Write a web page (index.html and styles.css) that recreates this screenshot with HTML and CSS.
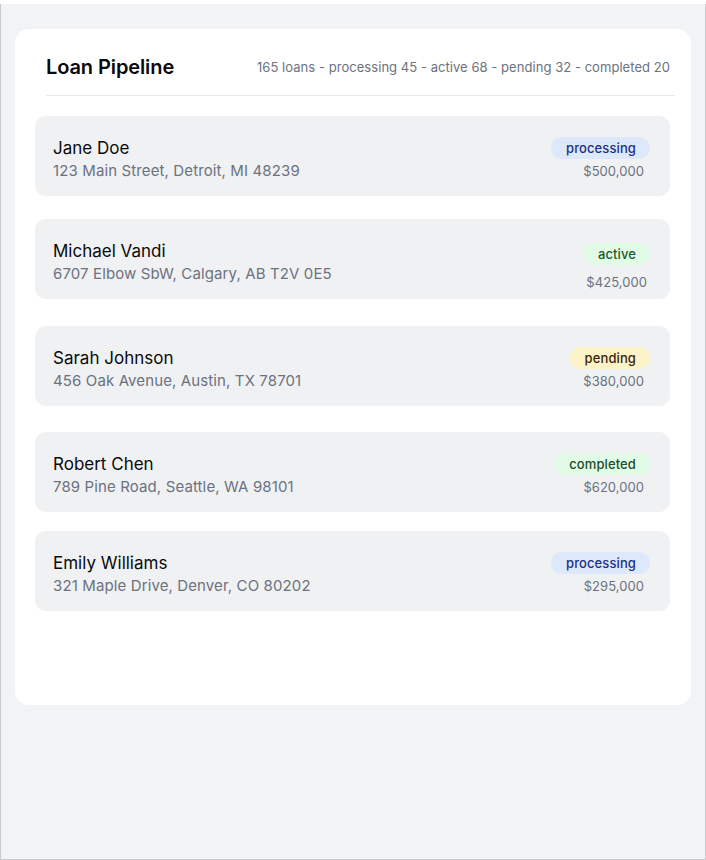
FILE: index.html
```html
<!DOCTYPE html>
<html lang="en">
<head>
<meta charset="utf-8">
<title>Loan Pipeline</title>
<link rel="stylesheet" href="styles.css">
</head>
<body>
<div class="frame">
  <div class="card">
    <div class="header">
      <h1 class="title">Loan Pipeline</h1>
      <div class="summary">165 loans - processing 45 - active 68 - pending 32 - completed 20</div>
    </div>
    <div class="list">
      <div class="row">
        <div class="info">
          <div class="name">Jane Doe</div>
          <div class="address">123 Main Street, Detroit, MI 48239</div>
        </div>
        <div class="meta">
          <span class="badge badge-processing">processing</span>
          <span class="amount">$500,000</span>
        </div>
      </div>
      <div class="row">
        <div class="info">
          <div class="name">Michael Vandi</div>
          <div class="address">6707 Elbow SbW, Calgary, AB T2V 0E5</div>
        </div>
        <div class="meta meta-loose">
          <span class="badge badge-active">active</span>
          <span class="amount">$425,000</span>
        </div>
      </div>
      <div class="row">
        <div class="info">
          <div class="name">Sarah Johnson</div>
          <div class="address">456 Oak Avenue, Austin, TX 78701</div>
        </div>
        <div class="meta">
          <span class="badge badge-pending">pending</span>
          <span class="amount">$380,000</span>
        </div>
      </div>
      <div class="row">
        <div class="info">
          <div class="name">Robert Chen</div>
          <div class="address">789 Pine Road, Seattle, WA 98101</div>
        </div>
        <div class="meta">
          <span class="badge badge-completed">completed</span>
          <span class="amount">$620,000</span>
        </div>
      </div>
      <div class="row">
        <div class="info">
          <div class="name">Emily Williams</div>
          <div class="address">321 Maple Drive, Denver, CO 80202</div>
        </div>
        <div class="meta">
          <span class="badge badge-processing">processing</span>
          <span class="amount">$295,000</span>
        </div>
      </div>
    </div>
  </div>
</div>
</body>
</html>
```
FILE: styles.css
```css
* { box-sizing: border-box; }

html, body {
  margin: 0;
  padding: 0;
  background: #ffffff;
  font-family: Inter, "Noto Sans", "Liberation Sans", sans-serif;
}

.frame {
  margin-top: 4px;
  height: 856px;
  background: #f2f3f5;
  border: 1px solid #c9cacc;
  border-top: none;
  padding: 25px 14px 0 14px;
}

.card {
  background: #ffffff;
  border-radius: 14px;
  height: 676px;
}

.header {
  display: flex;
  justify-content: space-between;
  align-items: center;
  margin: 0 16px 0 31px;
  padding: 24px 5px 14px 0;
  border-bottom: 1px solid #e5e7eb;
}

.title {
  margin: 0;
  font-size: 20px;
  line-height: 28px;
  font-weight: 600;
  color: #0a0a0a;
  letter-spacing: -0.1px;
}

.summary {
  font-size: 13px;
  line-height: 18px;
  color: #6b7280;
  letter-spacing: 0.05px;
}

.list {
  display: flex;
  flex-direction: column;
  padding: 20px 21px 0 20px;
}

.row {
  display: flex;
  justify-content: space-between;
  align-items: flex-start;
  height: 80px;
  padding: 0 20px 0 18px;
  background: #f0f1f3;
  border-radius: 11px;
}

.row:nth-child(2) { margin-top: 23px; }
.row:nth-child(3) { margin-top: 27px; }
.row:nth-child(4) { margin-top: 26px; }
.row:nth-child(5) { margin-top: 19px; }

.info {
  padding-top: 21px;
}

.name {
  font-size: 17px;
  line-height: 22px;
  color: #0a0a0a;
}

.address {
  margin-top: 2px;
  font-size: 15px;
  line-height: 20px;
  color: #6b7280;
  letter-spacing: 0.12px;
}

.meta {
  display: flex;
  flex-direction: column;
  align-items: flex-end;
  padding-top: 21px;
}

.meta-loose {
  padding-top: 24px;
}

.badge {
  display: inline-block;
  height: 22px;
  line-height: 22px;
  padding: 0 14px 0 15px;
  border-radius: 11px;
  font-size: 13px;
  font-weight: 500;
  letter-spacing: 0.1px;
}

.badge-processing { background: #dde8fb; color: #1e2f86; }
.badge-active { background: #e2fbe7; color: #1d5a2c; }
.badge-pending { background: #fcf2c8; color: #3f2408; }
.badge-completed { background: #e2fbe7; color: #1d4d2a; }

.amount {
  margin-top: 3px;
  margin-right: 6px;
  font-size: 13px;
  line-height: 18px;
  color: #6b7280;
  letter-spacing: 0.05px;
}

.meta-loose .amount {
  margin-top: 8px;
  margin-right: 3px;
}
```
